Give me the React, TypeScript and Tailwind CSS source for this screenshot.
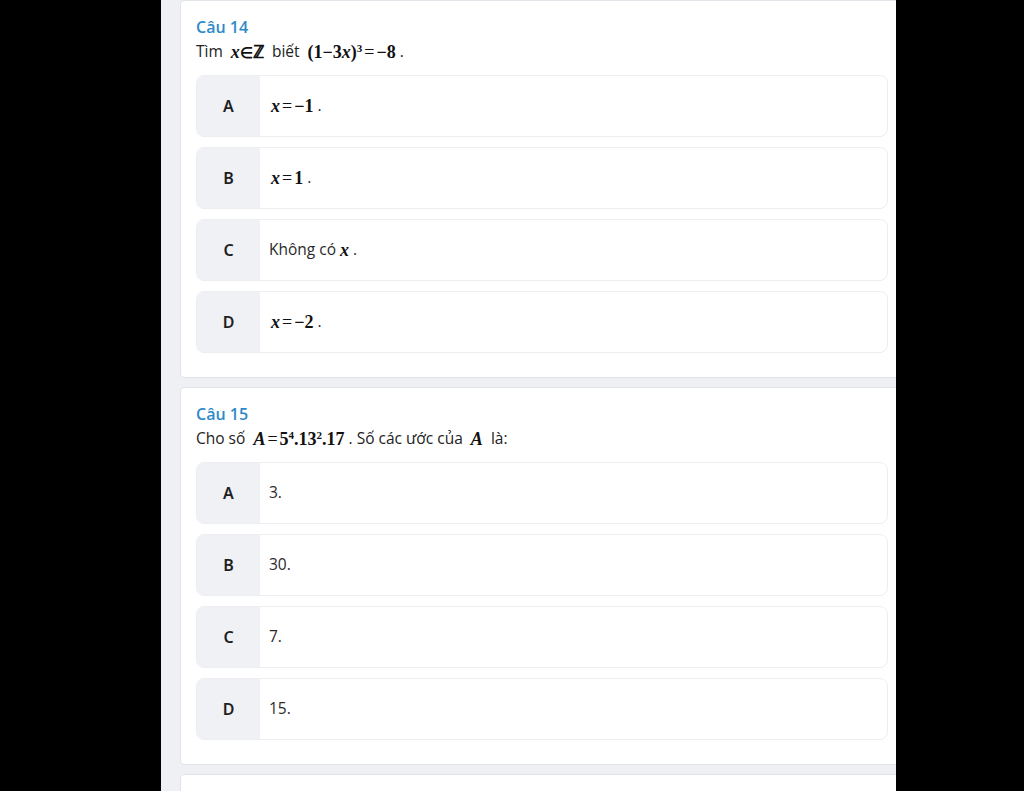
import type { ReactNode } from 'react';

type Choice = { key: string; body: ReactNode };

// bold serif pieces, like the rendered formulas on the page
function M({ children }: { children: ReactNode }) {
  return (
    <span className="font-['Liberation_Serif',serif] text-[18px] font-bold text-[#111]">{children}</span>
  );
}

function V({ children }: { children: ReactNode }) {
  return <i className="font-bold">{children}</i>;
}

const Eq = () => <span className="px-[2px] font-normal">=</span>;

function Option({ choice }: { choice: Choice }) {
  return (
    <div className="flex h-[62px] overflow-hidden rounded-lg border border-[#eceef1]">
      <div className="flex w-[63px] shrink-0 items-center justify-center bg-[#f0f1f4] font-['Noto_Sans',sans-serif] text-[16px] font-semibold text-[#1f1f1f]">
        {choice.key}
      </div>
      <div className="flex items-center pl-[9px] text-[15.5px] text-[#2a2a2a]">{choice.body}</div>
    </div>
  );
}

function Question({ no, text, choices }: { no: number; text: ReactNode; choices: Choice[] }) {
  return (
    <div className="rounded border border-[#e1e4e9] bg-white px-[15px] pt-[15px] pb-[24px]">
      <div className="text-[16px] leading-[22px] font-semibold text-[#2d8ac7]">Câu {no}</div>
      <div className="flex h-[28px] items-center text-[15.5px] text-[#222]">{text}</div>
      <div className="mt-[9px] flex flex-col gap-[10px]">
        {choices.map((c) => (
          <Option key={c.key} choice={c} />
        ))}
      </div>
    </div>
  );
}

export default function App() {
  const q14: Choice[] = [
    { key: 'A', body: <><span className="w-[2px]" /><M><V>x</V><Eq />−1</M>&nbsp;.</> },
    { key: 'B', body: <><span className="w-[2px]" /><M><V>x</V><Eq />1</M>&nbsp;.</> },
    { key: 'C', body: <>Không có&nbsp;<M><V>x</V></M>&nbsp;.</> },
    { key: 'D', body: <><span className="w-[2px]" /><M><V>x</V><Eq />−2</M>&nbsp;.</> },
  ];

  const q15: Choice[] = [
    { key: 'A', body: '3.' },
    { key: 'B', body: '30.' },
    { key: 'C', body: '7.' },
    { key: 'D', body: '15.' },
  ];

  return (
    <div className="flex h-[791px] overflow-hidden bg-black font-['Open_Sans','Noto_Sans',sans-serif]">
      <div className="w-[161px] shrink-0" />
      <div className="w-[735px] shrink-0 overflow-hidden bg-[#eef0f3] pl-[19px]">
        <div className="flex w-[724px] flex-col gap-[9px]">
          <Question
            no={14}
            text={
              <>
                Tìm&nbsp;&nbsp;
                <M>
                  <V>x</V>
                  <span className="text-[15px]">∈</span>ℤ
                </M>
                &nbsp;&nbsp;biết&nbsp;&nbsp;
                <M>
                  (1−3<V>x</V>)<sup className="text-[11px]">3</sup>
                  <Eq />−8
                </M>
                &nbsp;.
              </>
            }
            choices={q14}
          />
          <Question
            no={15}
            text={
              <>
                Cho số&nbsp;&nbsp;
                <M>
                  <V>A</V>
                  <Eq />5<sup className="text-[11px]">4</sup>.13<sup className="text-[11px]">2</sup>.17
                </M>
                &nbsp;. Số các ước của&nbsp;&nbsp;<M><V>A</V></M>&nbsp;&nbsp;là:
              </>
            }
            choices={q15}
          />
          <div className="h-[40px] rounded border border-[#e1e4e9] bg-white" />
        </div>
      </div>
    </div>
  );
}
